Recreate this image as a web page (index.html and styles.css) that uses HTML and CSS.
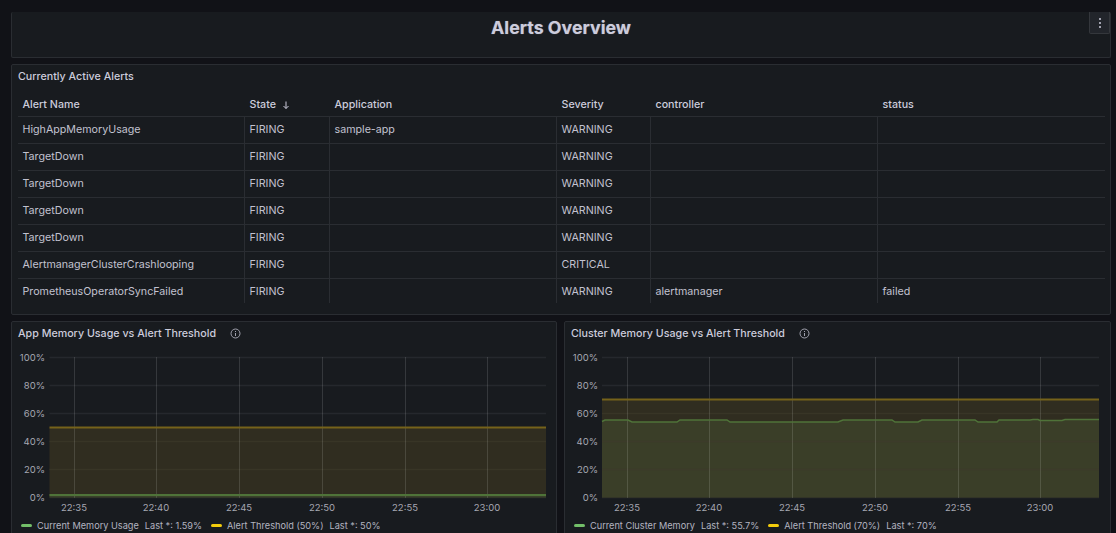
FILE: index.html
```html
<!DOCTYPE html>
<html lang="en">
<head>
<meta charset="utf-8">
<title>Alerts Overview</title>
<link rel="stylesheet" href="styles.css">
</head>
<body>
<main class="dash">
  <section class="panel title-panel">
    <h1>Alerts Overview</h1>
    <button class="kebab" aria-label="Menu"><svg width="4" height="12" viewBox="0 0 4 12"><circle cx="2" cy="2" r="1" /><circle cx="2" cy="6" r="1" /><circle cx="2" cy="10" r="1" /></svg></button>
  </section>
  <section class="panel table-panel">
    <h2>Currently Active Alerts</h2>
    <table>
      <colgroup><col class="c-name"><col class="c-state"><col class="c-app"><col class="c-sev"><col class="c-ctl"><col class="c-status"></colgroup>
      <thead>
        <tr><th>Alert Name</th><th>State <svg class="sort" width="10" height="10" viewBox="0 0 10 10"><path d="M5 1.5V8.5M2.5 6 5 8.5 7.5 6" /></svg></th><th>Application</th><th>Severity</th><th>controller</th><th>status</th></tr>
      </thead>
      <tbody>
        <tr><td>HighAppMemoryUsage</td><td>FIRING</td><td>sample-app</td><td>WARNING</td><td></td><td></td></tr>
        <tr><td>TargetDown</td><td>FIRING</td><td></td><td>WARNING</td><td></td><td></td></tr>
        <tr><td>TargetDown</td><td>FIRING</td><td></td><td>WARNING</td><td></td><td></td></tr>
        <tr><td>TargetDown</td><td>FIRING</td><td></td><td>WARNING</td><td></td><td></td></tr>
        <tr><td>TargetDown</td><td>FIRING</td><td></td><td>WARNING</td><td></td><td></td></tr>
        <tr><td>AlertmanagerClusterCrashlooping</td><td>FIRING</td><td></td><td>CRITICAL</td><td></td><td></td></tr>
        <tr><td>PrometheusOperatorSyncFailed</td><td>FIRING</td><td></td><td>WARNING</td><td>alertmanager</td><td>failed</td></tr>
      </tbody>
    </table>
  </section>
  <div class="charts">
    <section class="panel chart-panel">
      <h2>App Memory Usage vs Alert Threshold <svg class="info" width="11" height="11" viewBox="0 0 11 11"><circle cx="5.5" cy="5.5" r="4.5" /><path d="M5.5 5v3M5.5 3v1" /></svg></h2>
      <svg class="chart" width="545" height="172" viewBox="0 0 545 172">
        <g class="ylabels">
          <text x="33" y="15">100%</text><text x="33" y="43">80%</text><text x="33" y="71">60%</text><text x="33" y="99">40%</text><text x="33" y="127">20%</text><text x="33" y="155">0%</text>
        </g>
        <g class="hgrid"><path d="M37.5 11.5H534M37.5 39.5H534M37.5 67.5H534M37.5 95.5H534M37.5 123.5H534M37.5 151.5H534" /></g>
        <rect class="fill-y" x="37.5" y="81.5" width="496.5" height="70" />
        <rect class="fill-g" x="37.5" y="148" width="496.5" height="3.5" />
        <g class="hgrid-over"><path d="M37.5 95.5H534M37.5 123.5H534" /></g>
        <g class="vgrid"><path d="M62.5 11V152M144.5 11V152M227.5 11V152M310.5 11V152M393.5 11V152M475.5 11V152" /></g>
        <path class="line-y" d="M37.5 81.5H534" />
        <path class="line-g" d="M37.5 149H534" />
        <g class="xlabels">
          <text x="62" y="165">22:35</text><text x="144" y="165">22:40</text><text x="227" y="165">22:45</text><text x="310" y="165">22:50</text><text x="393" y="165">22:55</text><text x="475" y="165">23:00</text>
        </g>
      </svg>
      <div class="legend">
        <span class="key key-g"></span><span class="lname">Current Memory Usage</span><span class="lval">Last *: 1.59%</span>
        <span class="key key-y"></span><span class="lname">Alert Threshold (50%)</span><span class="lval">Last *: 50%</span>
      </div>
    </section>
    <section class="panel chart-panel">
      <h2>Cluster Memory Usage vs Alert Threshold <svg class="info" width="11" height="11" viewBox="0 0 11 11"><circle cx="5.5" cy="5.5" r="4.5" /><path d="M5.5 5v3M5.5 3v1" /></svg></h2>
      <svg class="chart" width="546" height="172" viewBox="0 0 546 172">
        <g class="ylabels">
          <text x="33" y="15">100%</text><text x="33" y="43">80%</text><text x="33" y="71">60%</text><text x="33" y="99">40%</text><text x="33" y="127">20%</text><text x="33" y="155">0%</text>
        </g>
        <g class="hgrid"><path d="M37 11.5H534M37 39.5H534M37 67.5H534M37 95.5H534M37 123.5H534M37 151.5H534" /></g>
        <rect class="fill-y" x="37" y="53.5" width="497" height="98" />
        <path class="fill-g2" d="M37 75.5 40 74H63L67 76H112L115 74H162L165 76H273L278 74H327L330 76H353L357 74H410L413 76H432L434 74H465L468 73.5H473L475 74.5H497L500 73.5H534V151.5H37Z" />
        <g class="hgrid-over"><path d="M37 67.5H534M37 95.5H534M37 123.5H534" /></g>
        <g class="vgrid"><path d="M62.5 11V152M144.5 11V152M227.5 11V152M310.5 11V152M393.5 11V152M475.5 11V152" /></g>
        <path class="line-y" d="M37 53.5H534" />
        <path class="line-g2" d="M37 75.5 40 74H63L67 76H112L115 74H162L165 76H273L278 74H327L330 76H353L357 74H410L413 76H432L434 74H465L468 73.5H473L475 74.5H497L500 73.5H534" />
        <g class="xlabels">
          <text x="62" y="165">22:35</text><text x="144" y="165">22:40</text><text x="227" y="165">22:45</text><text x="310" y="165">22:50</text><text x="393" y="165">22:55</text><text x="475" y="165">23:00</text>
        </g>
      </svg>
      <div class="legend">
        <span class="key key-g"></span><span class="lname">Current Cluster Memory</span><span class="lval">Last *: 55.7%</span>
        <span class="key key-y"></span><span class="lname">Alert Threshold (70%)</span><span class="lval">Last *: 70%</span>
      </div>
    </section>
  </div>
</main>
</body>
</html>
```
FILE: styles.css
```css
* { box-sizing: border-box; }
html, body { margin: 0; height: 533px; overflow: hidden; background: #111217; }
body { font-family: Inter, "Liberation Sans", sans-serif; color: #ccccdc; font-size: 10.7px; }
.dash { display: flex; flex-direction: column; padding: 12px 5px 0 11px; }
.panel { background: #181b1f; border: 1px solid #2a2d32; border-radius: 2px; position: relative; }
.title-panel { height: 46px; border-top: 0; text-align: center; }
h1 { margin: 0; padding-top: 4px; font-size: 17.8px; line-height: 23px; font-weight: 700; color: #ccccdc; text-shadow: 0 0 1px rgba(204, 204, 220, .5); }
.kebab { position: absolute; top: 0; right: 0; width: 21px; height: 22px; padding: 0; display: flex; align-items: center; justify-content: center; background: #22252b; border: 1px solid #34373c; border-top: 0; border-radius: 0 0 2px 2px; }
.kebab svg { fill: #ccccdc; }
.table-panel { margin-top: 6px; height: 251px; padding: 0 5px 0 6px; }
h2 { margin: 0; font-size: 10.7px; font-weight: 500; line-height: 14px; color: #ccccdc; }
.table-panel h2 { padding-top: 5px; height: 27px; }
table { width: 1087px; table-layout: fixed; border-collapse: collapse; }
.c-name { width: 226px; }
.c-state { width: 85px; }
.c-app { width: 227px; }
.c-sev { width: 94px; }
.c-ctl { width: 227px; }
.c-status { width: 228px; }
th, td { text-align: left; padding: 0 0 0 5px; font-size: 10.7px; overflow: hidden; white-space: nowrap; }
th { height: 24px; padding-top: 2px; font-weight: 500; color: #ccccdc; border-bottom: 1px solid #2a2d32; border-left: 1px solid transparent; }
td { height: 27px; font-weight: 400; color: #c2c2d0; border-bottom: 1px solid #2a2d32; border-left: 1px solid #2a2d32; }
th:first-child, td:first-child { border-left: 0; padding-left: 4.5px; }
tbody tr:last-child td { height: 25px; padding-top: 1px; border-bottom: 0; }
.sort { margin-left: 2px; vertical-align: -2px; }
.sort path { fill: none; stroke: #ccccdc; stroke-width: 1; }
.charts { display: grid; grid-template-columns: 546px 547px; gap: 7px; margin-top: 6px; }
.chart-panel { height: 232px; padding: 0; }
.chart-panel h2 { padding: 5px 0 0 6px; height: 24px; }
.info { margin-left: 11px; vertical-align: -2px; }
.info circle, .info path { fill: none; stroke: #a0a1ad; stroke-width: 1; }
.chart { display: block; }
.chart text { font-family: Inter, "Liberation Sans", sans-serif; font-size: 9.5px; fill: #a6a7b2; }
.ylabels text { text-anchor: end; }
.xlabels text { text-anchor: middle; }
.hgrid path { stroke: #25282d; stroke-width: 1.5; fill: none; }
.hgrid-over path { stroke: #3d3b2c; stroke-width: 1.5; fill: none; opacity: .6; }
.vgrid path { stroke: rgba(255, 255, 255, .13); stroke-width: 1; fill: none; }
.fill-y { fill: #302d20; }
.fill-g { fill: #39412a; }
.fill-g2 { fill: #3a3e28; }
.line-y { stroke: #75621a; stroke-width: 2; fill: none; }
.line-g { stroke: #4f7339; stroke-width: 2; fill: none; }
.line-g2 { stroke: #4f7339; stroke-width: 1.5; fill: none; }
.legend { display: flex; align-items: center; padding-left: 9px; height: 14px; font-size: 9.2px; color: #b3b4c0; white-space: nowrap; }
.key { width: 11px; height: 3px; border-radius: 2px; margin-right: 5px; }
.key-g { background: #73bf69; }
.key-y { background: #f2cc0c; margin-left: 9px; }
.lval { margin-left: 6px; }
```
